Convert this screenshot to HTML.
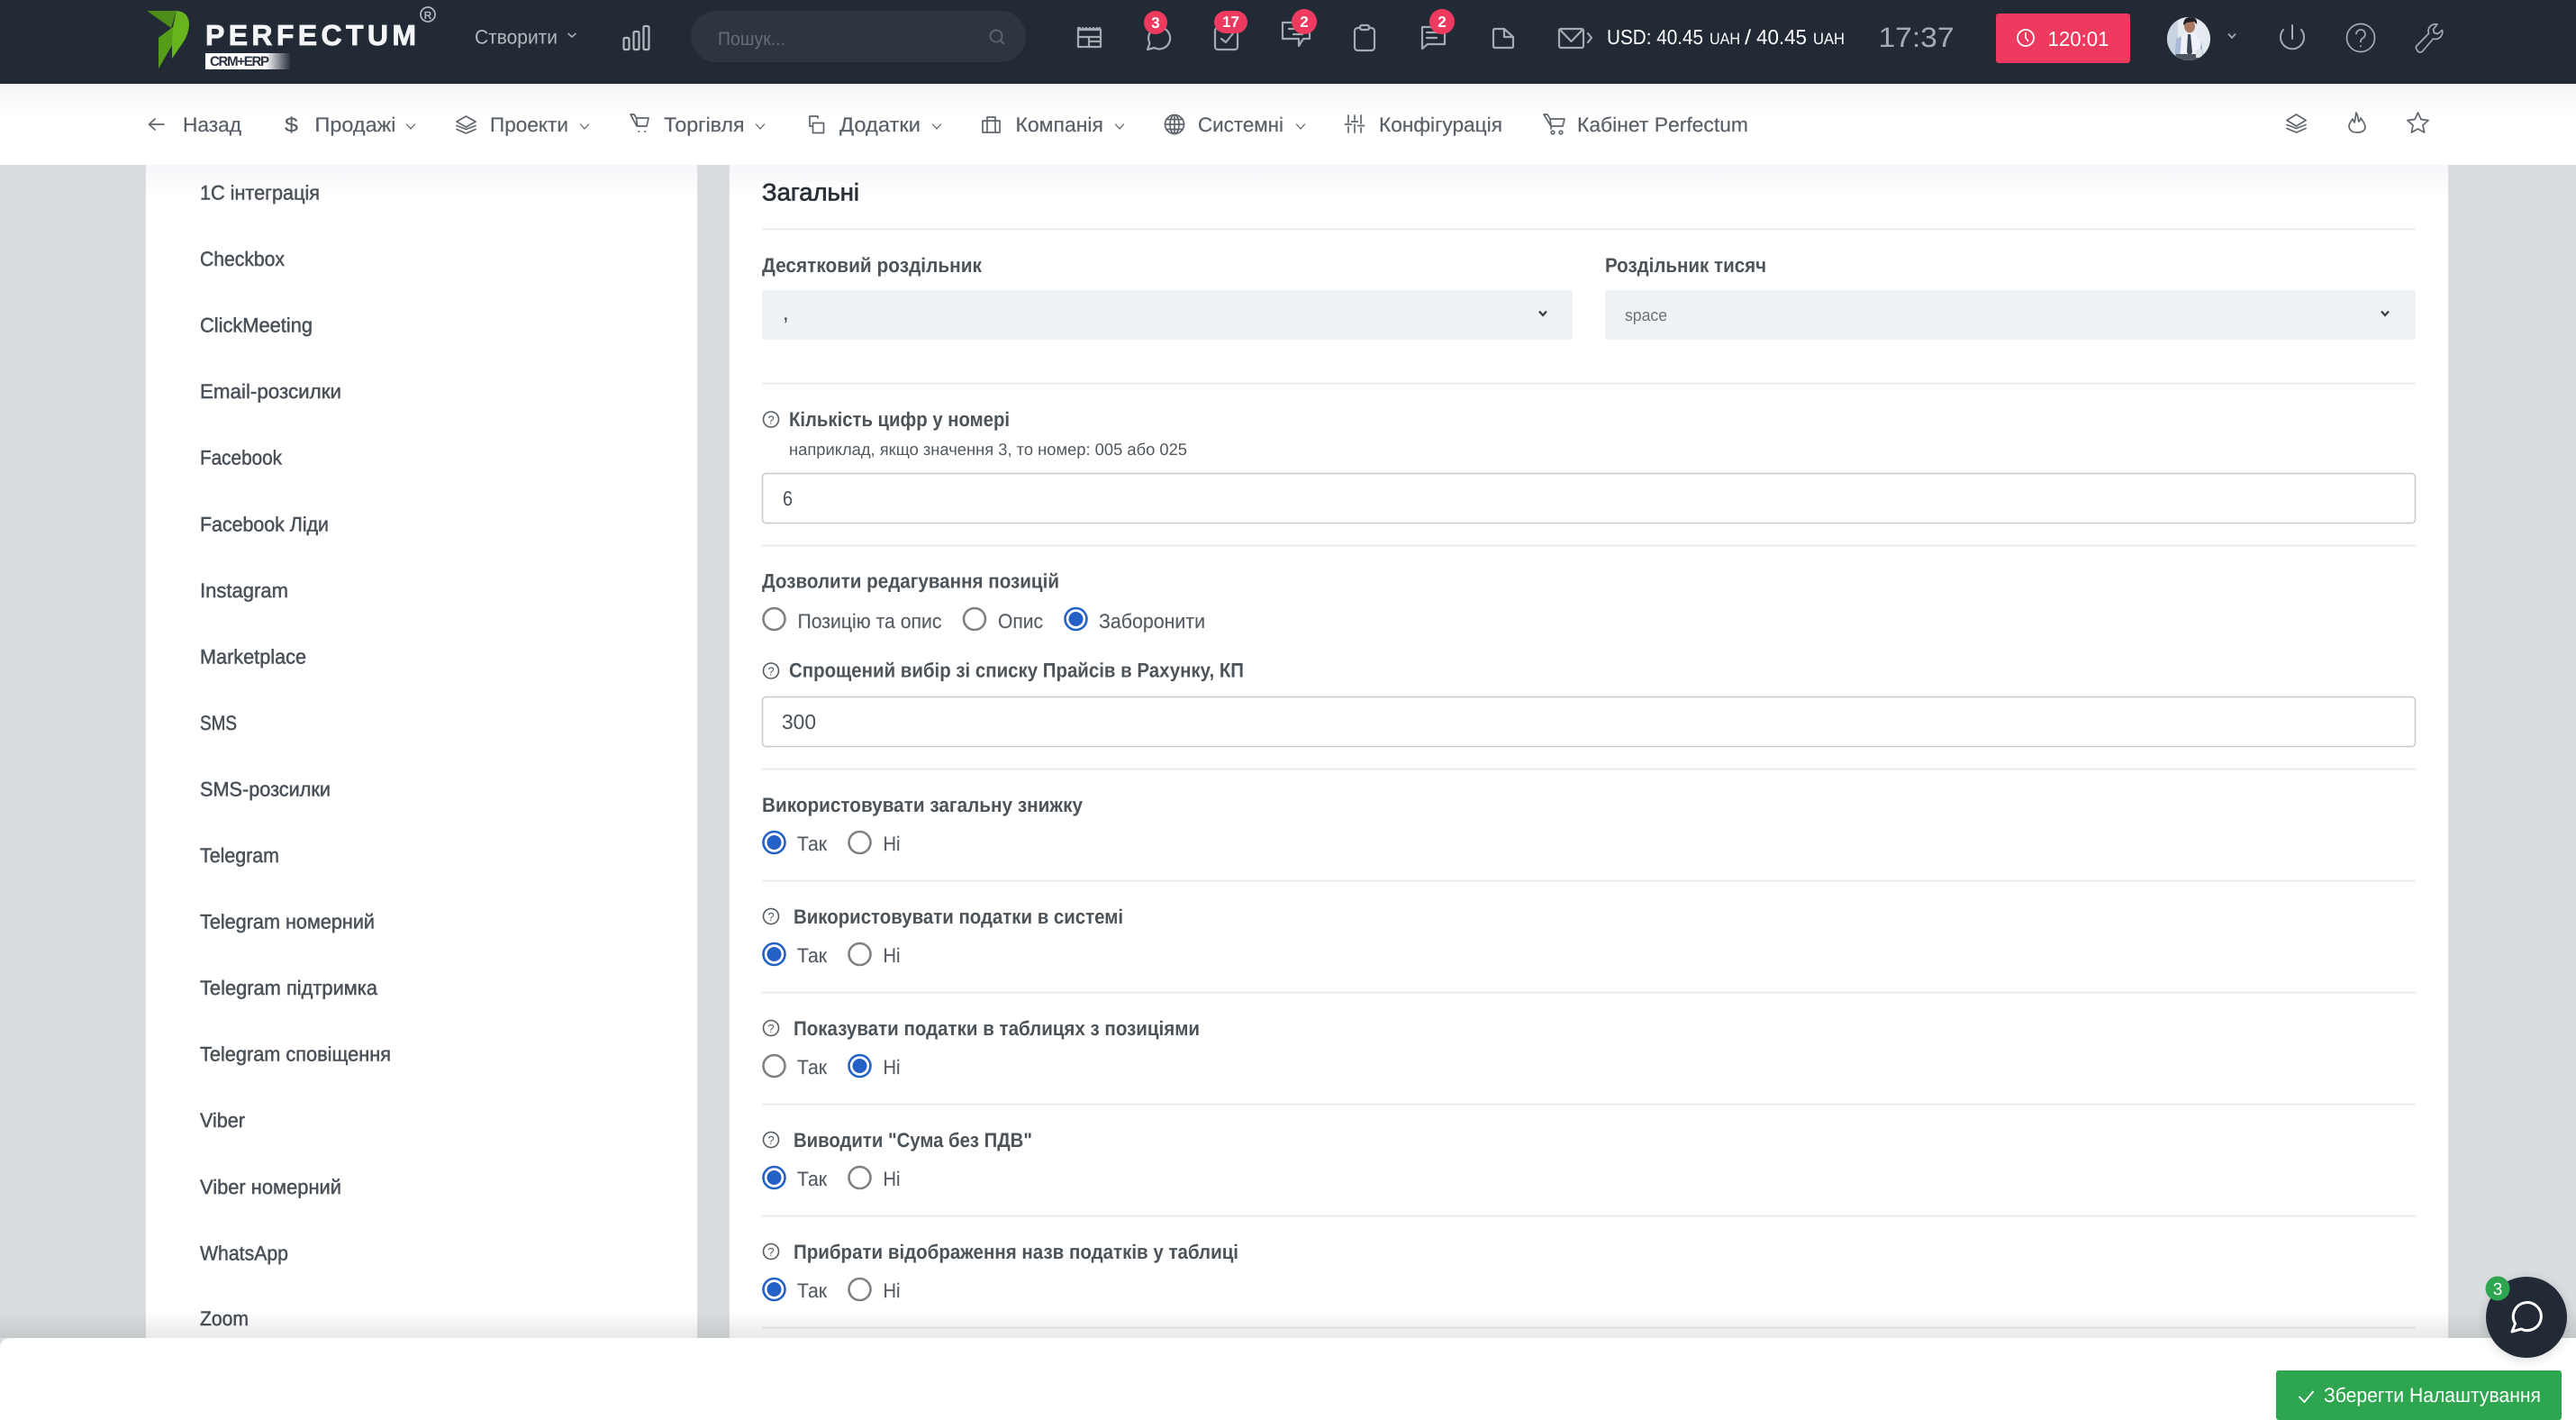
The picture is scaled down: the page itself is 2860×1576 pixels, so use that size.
<!DOCTYPE html>
<html lang="uk"><head><meta charset="utf-8"><title>Perfectum</title>
<style>
html,body{margin:0;padding:0;width:2860px;height:1576px;overflow:hidden;background:#d9dddf}
svg{display:block}
text{font-family:"Liberation Sans","DejaVu Sans",sans-serif;text-rendering:geometricPrecision}
.s text{font-size:22.5px;fill:#4a5159;stroke:#4a5159;stroke-width:.5px}
.n text{font-size:22.5px;fill:#5a6068;stroke:#5a6068;stroke-width:.2px}
.l text{font-size:22.5px;font-weight:700;fill:#4d5459}
.r text{font-size:22.5px;fill:#555c63;stroke:#555c63;stroke-width:.15px}
.b text{font-size:17px;font-weight:700;fill:#fff;text-anchor:middle}
.hi{fill:none;stroke:#a6abb1;stroke-width:2.2;stroke-linejoin:round;stroke-linecap:round}
.ni{fill:none;stroke:#5f656c;stroke-width:1.7;stroke-linejoin:round;stroke-linecap:round}
.q circle{fill:none;stroke:#555c62;stroke-width:1.6}
.q text{font-size:13px;fill:#555c62;text-anchor:middle}
.ln{fill:#e9ecee}
.o{fill:#fff;stroke:#808080;stroke-width:2.6}
.c{fill:#fff;stroke:#2461c4;stroke-width:2.6}
.d{fill:#2461c4}
</style></head><body>
<svg xmlns="http://www.w3.org/2000/svg" width="2860" height="1576" viewBox="0 0 2860 1576">
<defs>
<linearGradient id="g1" x1="0" y1="0" x2="0" y2="1"><stop offset="0" stop-color="#f6f6fa"/><stop offset="1" stop-color="#fff"/></linearGradient>
<linearGradient id="g2" x1="0" y1="0" x2="0" y2="1"><stop offset="0" stop-color="#000" stop-opacity="0"/><stop offset="1" stop-color="#000" stop-opacity=".09"/></linearGradient>
<linearGradient id="g3" x1="0" y1="0" x2="1" y2="0"><stop offset="0" stop-color="#fff"/><stop offset=".7" stop-color="#fff"/><stop offset="1" stop-color="#fff" stop-opacity="0"/></linearGradient>
<filter id="sh" x="-30%" y="-30%" width="160%" height="160%"><feGaussianBlur stdDeviation="6"/></filter>
<clipPath id="av"><circle cx="2430" cy="43" r="24"/></clipPath>
</defs>
<rect width="2860" height="1576" fill="#d9dddf"/>

<!-- panels -->
<rect x="162" y="183" width="612" height="1393" fill="#fff"/>
<rect x="810" y="183" width="1908" height="1393" fill="#fff"/>
<rect x="162" y="183" width="612" height="36" fill="url(#g1)"/>
<rect x="810" y="183" width="1908" height="36" fill="url(#g1)"/>

<!-- sidebar -->
<g class="s">
<text x="222" y="221.5" textLength="133" lengthAdjust="spacingAndGlyphs">1C інтеграція</text>
<text x="222" y="295" textLength="94" lengthAdjust="spacingAndGlyphs">Checkbox</text>
<text x="222" y="368.6" textLength="125" lengthAdjust="spacingAndGlyphs">ClickMeeting</text>
<text x="222" y="442.2" textLength="157" lengthAdjust="spacingAndGlyphs">Email-розсилки</text>
<text x="222" y="515.7" textLength="91" lengthAdjust="spacingAndGlyphs">Facebook</text>
<text x="222" y="589.3" textLength="143" lengthAdjust="spacingAndGlyphs">Facebook Ліди</text>
<text x="222" y="662.8" textLength="98" lengthAdjust="spacingAndGlyphs">Instagram</text>
<text x="222" y="736.4" textLength="118" lengthAdjust="spacingAndGlyphs">Marketplace</text>
<text x="222" y="809.9" textLength="41" lengthAdjust="spacingAndGlyphs">SMS</text>
<text x="222" y="883.5" textLength="145" lengthAdjust="spacingAndGlyphs">SMS-розсилки</text>
<text x="222" y="957" textLength="88" lengthAdjust="spacingAndGlyphs">Telegram</text>
<text x="222" y="1030.6" textLength="194" lengthAdjust="spacingAndGlyphs">Telegram номерний</text>
<text x="222" y="1104.1" textLength="197" lengthAdjust="spacingAndGlyphs">Telegram підтримка</text>
<text x="222" y="1177.7" textLength="212" lengthAdjust="spacingAndGlyphs">Telegram сповіщення</text>
<text x="222" y="1251.2" textLength="50" lengthAdjust="spacingAndGlyphs">Viber</text>
<text x="222" y="1324.8" textLength="157" lengthAdjust="spacingAndGlyphs">Viber номерний</text>
<text x="222" y="1398.4" textLength="98" lengthAdjust="spacingAndGlyphs">WhatsApp</text>
<text x="222" y="1471" textLength="54" lengthAdjust="spacingAndGlyphs">Zoom</text>
</g>

<!-- main -->
<text x="846" y="222.5" font-size="27" fill="#2a3038" stroke="#2a3038" stroke-width=".7" textLength="108" lengthAdjust="spacingAndGlyphs">Загальні</text>
<rect class="ln" x="846" y="253.5" width="1836" height="2"/>
<g class="l">
<text x="846" y="302" textLength="244" lengthAdjust="spacingAndGlyphs">Десятковий роздільник</text>
<text x="1782" y="302" textLength="179" lengthAdjust="spacingAndGlyphs">Роздільник тисяч</text>
<text x="876" y="473" textLength="245" lengthAdjust="spacingAndGlyphs">Кількість цифр у номері</text>
<text x="846" y="652.7" textLength="330" lengthAdjust="spacingAndGlyphs">Дозволити редагування позицій</text>
<text x="876" y="751.7" textLength="505" lengthAdjust="spacingAndGlyphs">Спрощений вибір зі списку Прайсів в Рахунку, КП</text>
<text x="846" y="901.2" textLength="356" lengthAdjust="spacingAndGlyphs">Використовувати загальну знижку</text>
<text x="881" y="1025" textLength="366" lengthAdjust="spacingAndGlyphs">Використовувати податки в системі</text>
<text x="881" y="1149" textLength="451" lengthAdjust="spacingAndGlyphs">Показувати податки в таблицях з позиціями</text>
<text x="881" y="1273" textLength="265" lengthAdjust="spacingAndGlyphs">Виводити "Сума без ПДВ"</text>
<text x="881" y="1397" textLength="494" lengthAdjust="spacingAndGlyphs">Прибрати відображення назв податків у таблиці</text>
</g>
<rect x="846" y="322" width="900" height="55" rx="3" fill="#edf2f5"/>
<rect x="1782" y="322" width="900" height="55" rx="3" fill="#edf2f5"/>
<text x="869" y="355" font-size="24" fill="#444">,</text>
<text x="1804" y="356" font-size="18.5" fill="#6b7378" textLength="47" lengthAdjust="spacingAndGlyphs">space</text>
<path d="M1709 345.500l4 4.500 4-4.500M2644 345.500l4 4.500 4-4.500" fill="none" stroke="#333a42" stroke-width="2.200"/>
<rect class="ln" x="846" y="424.500" width="1836" height="2"/>
<text x="876" y="505" font-size="18.5" fill="#50575d" textLength="442" lengthAdjust="spacingAndGlyphs">наприклад, якщо значення 3, то номер: 005 або 025</text>
<rect x="846.500" y="525.500" width="1835" height="55" rx="4" fill="#fff" stroke="#c8cbce" stroke-width="1.500"/>
<text x="869" y="561" font-size="23" fill="#4a5159" textLength="11" lengthAdjust="spacingAndGlyphs">6</text>
<rect class="ln" x="846" y="604.500" width="1836" height="2"/>
<rect x="846.500" y="773.500" width="1835" height="55" rx="4" fill="#fff" stroke="#c8cbce" stroke-width="1.500"/>
<text x="868" y="809" font-size="23" fill="#4a5159" textLength="38" lengthAdjust="spacingAndGlyphs">300</text>
<rect class="ln" x="846" y="852.500" width="1836" height="2"/>
<rect class="ln" x="846" y="976.500" width="1836" height="2"/>
<rect class="ln" x="846" y="1100.500" width="1836" height="2"/>
<rect class="ln" x="846" y="1224.500" width="1836" height="2"/>
<rect class="ln" x="846" y="1348.500" width="1836" height="2"/>
<rect class="ln" x="846" y="1472.500" width="1836" height="2"/>

<g class="q">
<circle cx="856" cy="465.500" r="8.500"/><text x="856" y="470.500">?</text>
<circle cx="856" cy="744.500" r="8.500"/><text x="856" y="749.500">?</text>
<circle cx="856" cy="1017" r="8.500"/><text x="856" y="1022">?</text>
<circle cx="856" cy="1141" r="8.500"/><text x="856" y="1146">?</text>
<circle cx="856" cy="1265" r="8.500"/><text x="856" y="1270">?</text>
<circle cx="856" cy="1389" r="8.500"/><text x="856" y="1394">?</text>
</g>

<!-- radios -->
<circle class="o" cx="859.500" cy="687" r="12"/>
<circle class="o" cx="1082" cy="687" r="12"/>
<circle class="c" cx="1194.500" cy="687" r="12"/><circle class="d" cx="1194.500" cy="687" r="8"/>
<circle class="c" cx="859.500" cy="935" r="12"/><circle class="d" cx="859.500" cy="935" r="8"/>
<circle class="o" cx="954.500" cy="935" r="12"/>
<circle class="c" cx="859.500" cy="1059" r="12"/><circle class="d" cx="859.500" cy="1059" r="8"/>
<circle class="o" cx="954.500" cy="1059" r="12"/>
<circle class="o" cx="859.500" cy="1183" r="12"/>
<circle class="c" cx="954.500" cy="1183" r="12"/><circle class="d" cx="954.500" cy="1183" r="8"/>
<circle class="c" cx="859.500" cy="1307" r="12"/><circle class="d" cx="859.500" cy="1307" r="8"/>
<circle class="o" cx="954.500" cy="1307" r="12"/>
<circle class="c" cx="859.500" cy="1431" r="12"/><circle class="d" cx="859.500" cy="1431" r="8"/>
<circle class="o" cx="954.500" cy="1431" r="12"/>
<g class="r">
<text x="885.500" y="697" textLength="160" lengthAdjust="spacingAndGlyphs">Позицію та опис</text>
<text x="1108" y="697" textLength="50" lengthAdjust="spacingAndGlyphs">Опис</text>
<text x="1220" y="697" textLength="118" lengthAdjust="spacingAndGlyphs">Заборонити</text>
<text x="885" y="944" textLength="33" lengthAdjust="spacingAndGlyphs">Так</text><text x="980.500" y="944" textLength="19" lengthAdjust="spacingAndGlyphs">Ні</text>
<text x="885" y="1068" textLength="33" lengthAdjust="spacingAndGlyphs">Так</text><text x="980.500" y="1068" textLength="19" lengthAdjust="spacingAndGlyphs">Ні</text>
<text x="885" y="1192" textLength="33" lengthAdjust="spacingAndGlyphs">Так</text><text x="980.500" y="1192" textLength="19" lengthAdjust="spacingAndGlyphs">Ні</text>
<text x="885" y="1316" textLength="33" lengthAdjust="spacingAndGlyphs">Так</text><text x="980.500" y="1316" textLength="19" lengthAdjust="spacingAndGlyphs">Ні</text>
<text x="885" y="1440" textLength="33" lengthAdjust="spacingAndGlyphs">Так</text><text x="980.500" y="1440" textLength="19" lengthAdjust="spacingAndGlyphs">Ні</text>
</g>

<!-- nav bar -->
<rect y="93" width="2860" height="90" fill="#fff"/>
<rect y="93" width="2860" height="40" fill="url(#g1)"/>
<g class="n">
<text x="203" y="146" textLength="65" lengthAdjust="spacingAndGlyphs">Назад</text>
<text x="316" y="146" textLength="15" lengthAdjust="spacingAndGlyphs">$</text>
<text x="349.500" y="146" textLength="90" lengthAdjust="spacingAndGlyphs">Продажі</text>
<text x="544" y="146" textLength="87" lengthAdjust="spacingAndGlyphs">Проекти</text>
<text x="737" y="146" textLength="89.500" lengthAdjust="spacingAndGlyphs">Торгівля</text>
<text x="932" y="146" textLength="90" lengthAdjust="spacingAndGlyphs">Додатки</text>
<text x="1127.500" y="146" textLength="97.500" lengthAdjust="spacingAndGlyphs">Компанія</text>
<text x="1330" y="146" textLength="95" lengthAdjust="spacingAndGlyphs">Системні</text>
<text x="1531" y="146" textLength="137" lengthAdjust="spacingAndGlyphs">Конфігурація</text>
<text x="1751" y="146" textLength="190" lengthAdjust="spacingAndGlyphs">Кабінет Perfectum</text>
</g>
<g class="ni">
<path d="M182 138H166M172 132l-6.500 6 6.500 6"/>
<path d="M451.500 138l4.500 5 4.500-5M644.500 138l4.500 5 4.500-5M839.500 138l4.500 5 4.500-5M1035.500 138l4.500 5 4.500-5M1238.500 138l4.500 5 4.500-5M1439.500 138l4.500 5 4.500-5" stroke-width="1.300"/>
<path d="M517.500 129L528 135l-10.500 6L507 135zM507 139.500l10.500 4 10.500-4M507 143.500l10.500 4.500 10.500-4.500"/>
<path d="M700 127h4l2.500 4H720l-2 9h-11zM706.500 131l1 9M709 146h.6M716 146h.6"/>
<path d="M902.500 136.500h12v11h-12zM908 131V129H899v11h3"/>
<path d="M1091 134h19v13h-19zM1096 134v13M1105 134v13M1096 134v-4h9v4"/>
<circle cx="1304" cy="138" r="10.500"/><ellipse cx="1304" cy="138" rx="5" ry="10.500"/><path d="M1293.500 138h21M1295 132.500h18M1295 143.500h18M1304 127.500v21"/>
<path d="M1497 128v8M1497 141v6M1493.500 138h7M1504 128v5M1504 138v9M1500.500 135h7M1511 128v9M1511 142v5M1507.500 139.500h7"/>
<path d="M1714 127h4l3 5h16l-2 8h-13zM1721 132l1 8h13M1722 141v2"/>
<circle cx="1724" cy="147" r="1.800"/><circle cx="1733" cy="147" r="1.800"/>
<path d="M2549.500 127l10.500 6.500-10.500 6.500-10.500-6.500zM2539 138.500l10.500 4 10.500-4M2539 142.500l10.500 4.500 10.500-4.500"/>
<path d="M2616 125c3 5 1 7 3 10 1-1 2-3 2-4 3 4 5 7 5 10 0 4-4 6-9 6-6 0-9-3-9-7 0-3 2-5 4-8 1 1 1 3 2 4 1-3 1-6 2-11z"/>
<path d="M2684.500 125l3.500 7.500 8 1-6 5.500 1.600 8-7.100-4-7.100 4 1.600-8-6-5.500 8-1z"/>
</g>

<!-- header -->
<rect width="2860" height="93" fill="#222a36"/>
<path d="M163 12H196L190 31Z" fill="#4b8d18"/>
<path d="M196 12Q210 13 210 28Q209 38 204 46L191 65V50L176 76V42L192 30Z" fill="#68b41e"/>
<path d="M176 42L192 30L191 50L176 76Z" fill="#559c1b"/>
<text x="228" y="50" font-size="32" font-weight="700" fill="#f4f5f6" stroke="#f4f5f6" stroke-width=".8" textLength="234">PERFECTUM</text>
<rect x="228" y="59" width="95" height="18" fill="url(#g3)"/>
<text x="233" y="73" font-size="15" font-weight="700" fill="#2a3240" textLength="66">CRM+ERP</text>
<circle cx="475" cy="16" r="8" fill="none" stroke="#b0b4ba" stroke-width="1.800"/>
<text x="475" y="21" font-size="12" font-weight="700" fill="#b0b4ba" text-anchor="middle">R</text>

<text x="527" y="48.500" font-size="22" fill="#b5b9be" textLength="92" lengthAdjust="spacingAndGlyphs">Створити</text>
<path d="M630.500 37l4.500 4 4.500-4M2474 37.500l4 4.500 4-4.500" fill="none" stroke="#a6abb1" stroke-width="1.700"/>
<g class="hi" style="stroke:#b5b9be">
<rect x="692.500" y="42" width="6" height="13" rx="1.500"/><rect x="703.500" y="35" width="6" height="20" rx="1.500"/><rect x="714.500" y="29" width="6" height="26" rx="1.500"/>
</g>
<rect x="767" y="12" width="372" height="57" rx="28.500" fill="#2d3540"/>
<text x="797" y="50" font-size="21" fill="#666d76" textLength="75" lengthAdjust="spacingAndGlyphs">Пошук...</text>
<g fill="none" stroke="#5b626b" stroke-width="2"><circle cx="1106" cy="40" r="6.500"/><path d="M1111 45l4 4"/></g>

<g class="hi">
<path d="M1197 33h25v19h-25zM1197 41h25M1209 41v11M1209 46h13"/>
<path d="M1197 33v-2h2l1 2M1202 31l2 2 2-2 2 2 2-2 2 2 2-2 2 2 2-2 2 2 1-2v2"/>
<path d="M1274 55L1276.500 48A12 12 0 1 1 1281.500 53Z"/>
<rect x="1349" y="31" width="25" height="24" rx="3"/><path d="M1356 43l5 4 8-10"/>
<path d="M1424 25H1454V43H1447L1442 51V43H1424ZM1431 32h8M1436 38h10"/>
<rect x="1504" y="31" width="22" height="25" rx="3.500"/><rect x="1510" y="28" width="10" height="5" rx="2" fill="#222a36"/>
<path d="M1579 30H1604V49H1585L1579 54ZM1584 36h15M1584 42h11"/>
<path d="M1658 34q0-2 2-2h10L1680 41V51q0 2-2 2H1660q-2 0-2-2ZM1670 32V41H1680"/>
<rect x="1731" y="32" width="27" height="21" rx="2"/><path d="M1732 33L1744.500 46 1757 33M1763 37l4 5-4 5"/>
</g>
<rect x="1270" y="12" width="26" height="26" rx="13" fill="#ed3a5e"/>
<rect x="1348" y="12" width="37" height="25" rx="12.500" fill="#ed3a5e"/>
<circle cx="1448" cy="24" r="14" fill="#ed3a5e"/>
<circle cx="1601" cy="24" r="14" fill="#ed3a5e"/>
<g class="b">
<text x="1283" y="31">3</text><text x="1366.500" y="30">17</text><text x="1448" y="30">2</text><text x="1601" y="30">2</text>
</g>

<text x="1784" y="49" font-size="23" fill="#fff" textLength="107" lengthAdjust="spacingAndGlyphs">USD: 40.45</text>
<text x="1898" y="49" font-size="18" fill="#fff" textLength="34" lengthAdjust="spacingAndGlyphs">UAH</text>
<text x="1937" y="49" font-size="23" fill="#fff" textLength="7" lengthAdjust="spacingAndGlyphs">/</text>
<text x="1950" y="49" font-size="23" fill="#fff" textLength="56" lengthAdjust="spacingAndGlyphs">40.45</text>
<text x="2013" y="49" font-size="18" fill="#fff" textLength="35" lengthAdjust="spacingAndGlyphs">UAH</text>
<text x="2085.500" y="52" font-size="31" fill="#a6abb1" textLength="84" lengthAdjust="spacingAndGlyphs">17:37</text>
<rect x="2216" y="15" width="149" height="55" rx="3" fill="#ed3a5e"/>
<circle cx="2249" cy="42" r="9" fill="none" stroke="#fff" stroke-width="1.800"/><path d="M2249 36v6l3 4" fill="none" stroke="#fff" stroke-width="1.600"/>
<text x="2273.500" y="51" font-size="23" fill="#fff" textLength="68" lengthAdjust="spacingAndGlyphs">120:01</text>

<g clip-path="url(#av)">
<rect x="2406" y="19" width="48" height="48" fill="#e6ebf2"/>
<rect x="2406" y="19" width="12" height="48" fill="#c9d3e2"/>
<path d="M2414 67l2-24 10-6h10l8 8 2 22z" fill="#eef1f7"/>
<path d="M2414 67l2-24 6-3-2 27zM2444 45l3 22h-6z" fill="#a9bbd8"/>
<path d="M2429 38l3 0 2 20-3 5-3-5z" fill="#3a4452"/>
<ellipse cx="2431" cy="29" rx="6" ry="7.500" fill="#a77a62"/>
<path d="M2424 28q0-9 8-9t7 8l-3-3-8 1z" fill="#1f1f24"/>
<path d="M2416 60h24l2 7h-28z" fill="#4d5560"/>
<rect x="2438" y="55" width="7" height="9" fill="#dfe3e8"/>
</g>

<g class="hi" style="stroke-width:2">
<path d="M2545 28v15M2535 33a13 13 0 1 0 20 0"/>
</g>
<g fill="none" stroke="#a6abb1" stroke-width="1.700" stroke-linecap="round" stroke-linejoin="round">
<circle cx="2621" cy="42" r="15.500"/>
<path d="M2616 37.500a5 5 0 1 1 7 5c-1.600 1-2 2-2 4M2621 51v.4"/>
<path d="M2706 27a8 8 0 0 0-10 7c0 1 .3 2 .6 3L2684 50a3.500 3.500 0 0 0-.5 5.500l1 1.500a3.500 3.500 0 0 0 5 0l12-14c3 1 6 0 8-2a8 8 0 0 0 2-7.500l-5 4-4-1-1-4z"/>
</g>

<!-- bottom bar -->
<rect y="1455" width="2860" height="30" fill="url(#g2)"/>
<path d="M0 1576V1497Q0 1485 12 1485H2860V1576Z" fill="#fff"/>
<rect x="2527" y="1521" width="317" height="55" rx="3" fill="#2ea650"/>
<path d="M2552.500 1550l6 6 10-12" fill="none" stroke="#fff" stroke-width="1.800"/>
<text x="2580" y="1556" font-size="22.500" fill="#fff" textLength="241" lengthAdjust="spacingAndGlyphs">Зберегти Налаштування</text>

<!-- chat -->
<circle cx="2805" cy="1464" r="45" fill="#000" opacity=".15" filter="url(#sh)"/>
<circle cx="2805" cy="1462" r="45" fill="#222a36"/>
<path d="M2789 1478L2792.500 1469A15.500 15.500 0 1 1 2799 1475Z" fill="none" stroke="#fff" stroke-width="3" stroke-linejoin="round"/>
<circle cx="2773" cy="1430" r="13.500" fill="#2ea650"/>
<text x="2773" y="1437" font-size="19" fill="#fff" text-anchor="middle">3</text>
</svg>
</body></html>
